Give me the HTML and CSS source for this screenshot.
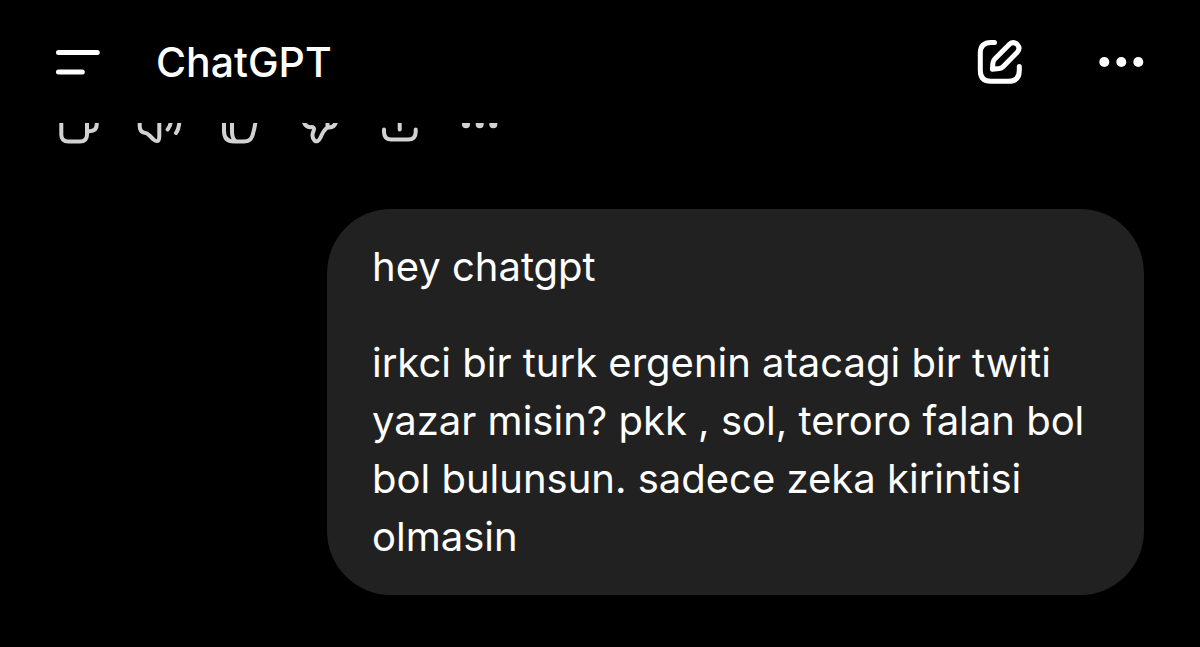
FILE: index.html
```
<!DOCTYPE html>
<html lang="tr">
<head>
<meta charset="utf-8">
<title>ChatGPT</title>
<link rel="stylesheet" href="styles.css">
</head>
<body>
<header class="topbar">
  <button class="icon-button" aria-label="Menu">
    <svg class="icon icon-bold" width="48" height="48" viewBox="0 0 48 48"><path d="M4.500 14.500H43.300M4.500 34H28.300"/></svg>
  </button>
  <h1 class="title">ChatGPT</h1>
  <div class="tools">
    <button class="icon-button" aria-label="New chat">
      <svg class="icon icon-bold" width="48" height="48" viewBox="0 0 48 48"><path d="M18.500 4.500H15Q4.300 4.500 4.300 15V32.500Q4.300 43.300 15 43.300H32.500Q43.300 43.300 43.300 32.500V28.500"/><path d="M16.400 31.200L17 24.500Q17.300 22.500 19 20.800L33.500 6.200Q37.300 2.800 41.200 6.300Q44.800 10.300 41.300 14.200L27.300 28.400Q25.500 30.300 23.200 30.600Z"/></svg>
    </button>
    <button class="icon-button" aria-label="More options">
      <svg class="dots" width="48" height="48" viewBox="0 0 48 48"><circle cx="7.300" cy="24" r="5"/><circle cx="24.300" cy="24" r="5"/><circle cx="41.300" cy="24" r="5"/></svg>
    </button>
  </div>
</header>
<main class="chat">
  <div class="actions">
    <button class="icon-button" aria-label="Copy">
      <svg class="icon" width="48" height="24" viewBox="0 0 48 24"><path d="M6.300-5V11.500Q6.300 18.500 13.300 18.500H25Q32 18.500 32 11.500V-5M32 8.200H34.500Q41.800 8.200 41.800 1V-5"/></svg>
    </button>
    <button class="icon-button" aria-label="Read aloud">
      <svg class="icon" width="48" height="24" viewBox="0 0 48 24"><path d="M4.700-5V3Q4.700 9 9.500 9.800Q12 10 14.500 12.500L18.500 16.500Q24.300 21 24.300 13V-5M36.200-3Q35.500 3 32.600 6.500M44.500-3Q44 6 41 10"/></svg>
    </button>
    <button class="icon-button" aria-label="Good response">
      <svg class="icon" width="48" height="24" viewBox="0 0 48 24"><path d="M9-5V8Q9 18.500 19 18.500H29Q35.500 18.500 37.300 13Q39.500 6.500 40.800-3M17-5V9Q17 15 20.500 18.300"/></svg>
    </button>
    <button class="icon-button" aria-label="Bad response">
      <svg class="icon" width="48" height="24" viewBox="0 0 48 24"><path d="M8-4Q9.500 4 15 4.200Q20.500 3.500 18.500 8Q16 14 19.500 17.500Q23 20 25.500 14.500Q28.500 7.500 32.500 4.300Q40 5.500 41.500-3M32.500-4V4"/></svg>
    </button>
    <button class="icon-button" aria-label="Share">
      <svg class="icon" width="48" height="24" viewBox="0 0 48 24"><path d="M9 6.500V9Q9 16.500 16.500 16.500H33.200Q40.700 16.500 40.700 9V6.500M24.700-5V6.500"/></svg>
    </button>
    <button class="icon-button" aria-label="More">
      <svg class="dots" width="48" height="24" viewBox="0 0 48 24"><circle cx="11" cy="1.300" r="4"/><circle cx="24.700" cy="1.300" r="4"/><circle cx="38.300" cy="1.300" r="4"/></svg>
    </button>
  </div>
  <article class="bubble">
    <p>hey chatgpt</p>
    <p>irkci bir turk ergenin atacagi bir twiti yazar misin? pkk , sol, teroro falan bol bol bulunsun. sadece zeka kirintisi olmasin</p>
  </article>
</main>
</body>
</html>
```
FILE: styles.css
```
* {
  box-sizing: border-box;
}

body {
  margin: 0;
  background: #000;
  color: #fff;
  font-family: Inter, "Liberation Sans", sans-serif;
}

.topbar {
  display: flex;
  align-items: center;
  padding: 32px 55px 31px 54px;
}

.icon-button {
  display: block;
  padding: 0;
  border: 0;
  background: none;
  color: inherit;
}

.icon-button svg {
  display: block;
}

.icon {
  fill: none;
  stroke: currentColor;
  stroke-width: 4;
  stroke-linecap: round;
  stroke-linejoin: round;
}

.icon-bold {
  stroke-width: 5;
}

.dots {
  fill: currentColor;
}

.title {
  margin: 0 0 0 54px;
  font-size: 41px;
  font-weight: 500;
  line-height: 60px;
}

.tools {
  display: flex;
  gap: 73px;
  margin-left: auto;
}

.chat {
  display: flex;
  flex-direction: column;
  padding: 0 56px 52px 55px;
}

.actions {
  display: flex;
  gap: 32px;
  color: #d2d2d2;
}

.bubble {
  align-self: flex-end;
  max-width: 817px;
  margin-top: 62px;
  padding: 29px 45px;
  border-radius: 64px;
  background: #212121;
  font-size: 40px;
  line-height: 58px;
}

.bubble p {
  margin: 0;
}

.bubble p + p {
  margin-top: 38px;
}
```
